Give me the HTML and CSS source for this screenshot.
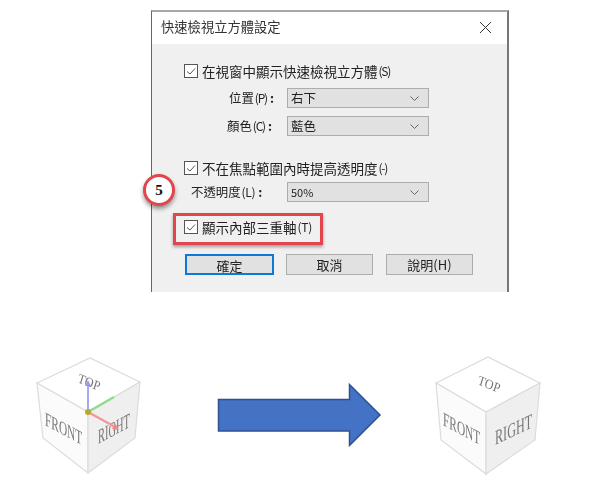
FILE: index.html
```html
<!DOCTYPE html>
<html lang="zh-Hant">
<head>
<meta charset="utf-8">
<title>快速檢視立方體設定</title>
<link rel="stylesheet" href="styles.css">
</head>
<body>
<main class="page">
  <section class="dialog">
    <header class="titlebar">
      <span class="title">快速檢視立方體設定</span>
      <svg class="close" width="13" height="13" viewBox="0 0 13 13"><path d="M1 1 12 12M12 1 1 12" stroke="#333" stroke-width="1" fill="none"/></svg>
    </header>
    <div class="body">
      <label class="check check-first"><span class="box"><svg width="12" height="12" viewBox="0 0 12 12"><path d="M2 6.500 5 9 10 3.500" stroke="#555" stroke-width="1" fill="none"/></svg></span>在視窗中顯示快速檢視立方體<span class="key">(S)</span></label>
      <div class="field field-first"><span class="field-label indent-wide">位置<span class="key">(P)</span><b class="colon">:</b></span><span class="select">右下<svg class="chev" width="9" height="5" viewBox="0 0 9 5"><path d="M.5.5 4.500 4.500 8.500.5" stroke="#666" fill="none"/></svg></span></div>
      <div class="field field-next"><span class="field-label indent-mid">顏色<span class="key">(C)</span><b class="colon">:</b></span><span class="select">藍色<svg class="chev" width="9" height="5" viewBox="0 0 9 5"><path d="M.5.5 4.500 4.500 8.500.5" stroke="#666" fill="none"/></svg></span></div>
      <label class="check check-second"><span class="box"><svg width="12" height="12" viewBox="0 0 12 12"><path d="M2 6.500 5 9 10 3.500" stroke="#555" stroke-width="1" fill="none"/></svg></span>不在焦點範圍內時提高透明度<span class="key">(-)</span></label>
      <div class="field field-tight"><span class="field-label indent-narrow">不透明度<span class="key key-wide">(L)</span><b class="colon">:</b></span><span class="select select-small">50%<svg class="chev" width="9" height="5" viewBox="0 0 9 5"><path d="M.5.5 4.500 4.500 8.500.5" stroke="#666" fill="none"/></svg></span></div>
      <label class="check check-third"><span class="box"><svg width="12" height="12" viewBox="0 0 12 12"><path d="M2 6.500 5 9 10 3.500" stroke="#555" stroke-width="1" fill="none"/></svg></span>顯示內部三重軸<span class="key key-wide">(T)</span></label>
      <div class="buttons">
        <button class="btn btn-primary" type="button">確定</button>
        <button class="btn" type="button">取消</button>
        <button class="btn btn-help" type="button">說明(H)</button>
      </div>
    </div>
    <div class="highlight"></div>
    <div class="step">5</div>
  </section>

  <section class="compare">
    <svg class="cube" width="110" height="125" viewBox="35 352 110 125">
      <path class="face-top" d="M37 383 90 358 140 382 88 412Z"/>
      <path class="face-left" d="M37 383 88 412 88 473 43 438Z"/>
      <path class="face-right" d="M88 412 140 382 135 438 88 473Z"/>
      <text class="cube-label" transform="matrix(.71 .38 0 1.2 45 425)">FRONT</text>
      <text class="cube-label" transform="matrix(.65 -.35 0 1.3 98 444)">RIGHT</text>
      <text class="cube-label" transform="matrix(.72 .3 -.25 .8 77 382)">TOP</text>
      <path d="M88 412V385" stroke="#a9a9f2" stroke-width="2" fill="none"/>
      <path d="M85 386 88 380 91 386Z" fill="#9a9ae8"/>
      <path d="M88 412 114 397" stroke="#8fdc8f" stroke-width="2.500" fill="none"/>
      <path d="M88 412 117 428" stroke="#ee9a9a" stroke-width="2.500" fill="none"/>
      <path d="M112 429 119 430 115 423Z" fill="#e88"/>
      <circle cx="88" cy="412" r="3" fill="#b8a830"/>
    </svg>
    <svg class="arrow" width="170" height="70" viewBox="215 380 170 70">
      <path d="M218.500 399.500H349.500V384.500L380 415 349.500 445.500V431H218.500Z" fill="#4472c4" stroke="#2f528f" stroke-width="1.500"/>
    </svg>
    <svg class="cube" width="110" height="125" viewBox="433 352 110 125">
      <path class="face-top" d="M436 383 488 357 540 383 486 412Z"/>
      <path class="face-left" d="M436 383 486 412 486 474 441 440Z"/>
      <path class="face-right" d="M486 412 540 383 535 440 486 474Z"/>
      <text class="cube-label" transform="matrix(.71 .38 0 1.2 443 425)">FRONT</text>
      <text class="cube-label" transform="matrix(.76 -.36 0 1.3 495 445)">RIGHT</text>
      <text class="cube-label" transform="matrix(.72 .3 -.25 .8 477 384)">TOP</text>
    </svg>
  </section>
</main>
</body>
</html>
```
FILE: styles.css
```css
* { box-sizing: border-box; }
html, body { margin: 0; padding: 0; background: #fff; }
body { font-family: "Noto Sans CJK TC", "Liberation Sans", sans-serif; color: #222; }
.page { width: 610px; height: 484px; overflow: hidden; padding-top: 10px; }

.dialog {
  position: relative;
  margin-left: 151px;
  width: 358px;
  height: 282px;
  background: #f0f0f0;
  border-top: 2px solid #a8a8a8;
  border-left: 1px solid #666;
  border-right: 2px solid #777;
  display: flex;
  flex-direction: column;
}
.titlebar {
  height: 32px;
  flex: none;
  background: #fff;
  display: flex;
  align-items: center;
  justify-content: space-between;
  padding: 0 15px 2px 10px;
}
.title { font-size: 13.3px; line-height: 30px; color: #333; margin-left: -1px; filter: blur(.3px); }
.body { padding: 20px 0 0 32px; display: flex; flex-direction: column; font-size: 13.5px; filter: blur(.3px); }

.check { display: flex; align-items: center; height: 14px; line-height: 14px; white-space: nowrap; }
.box {
  width: 14px; height: 14px; flex: none; margin-right: 4px;
  border: 1px solid #555; background: #fff;
  display: flex; align-items: center; justify-content: center;
}
.key { font-size: 12px; letter-spacing: -1.2px; margin-left: 1px; }
.key-wide { letter-spacing: -.3px; }
.colon { font-weight: 700; margin-left: 3px; }
.check-second { margin-top: 25px; }
.check-third { margin-top: 18px; }

.field { display: flex; align-items: center; height: 20px; }
.field-first { margin-top: 10px; }
.field-next { margin-top: 8px; }
.field-tight { margin-top: 7px; }
.field-label { width: 103px; flex: none; white-space: nowrap; font-size: 12.4px; }
.indent-wide { padding-left: 45px; }
.indent-mid { padding-left: 43px; }
.indent-narrow { padding-left: 7px; }
.select {
  width: 142px; height: 20px;
  background: #e1e1e1;
  border: 1px solid #adadad;
  padding: 0 9px 0 3px;
  display: flex; align-items: center; justify-content: space-between;
  font-size: 12.5px;
  line-height: 18px;
}
.select-small { font-size: 11px; }

.buttons { display: flex; margin: 20px 0 0 1px; }
.btn {
  width: 87px; height: 21px; margin: 0 13px 0 0; padding: 0;
  background: #e1e1e1; border: 1px solid #adadad;
  font: 13px/19px "Noto Sans CJK TC", sans-serif; color: #222;
}
.btn-primary { width: 89px; margin-right: 12px; border: 2px solid #0f78d4; }

.highlight {
  position: absolute; left: 21px; top: 201px;
  width: 150px; height: 32px;
  border: 3px solid #e2454b;
  box-shadow: 0 2px 3px rgba(0,0,0,.35);
}
.step {
  position: absolute; left: -9px; top: 162px;
  width: 32px; height: 32px; border-radius: 50%;
  background: #fff; border: 3px solid #e2454b;
  box-shadow: 0 3px 4px rgba(0,0,0,.4);
  display: flex; align-items: center; justify-content: center;
  font: bold 15px "Liberation Serif", serif; color: #111;
}

.compare { display: flex; align-items: center; margin-top: 60px; padding-left: 35px; height: 125px; }
.cube { flex: none; display: block; filter: blur(.5px); }
.arrow { flex: none; display: block; margin: 0 48px 0 70px; }
.face-top { fill: #fff; stroke: #dcdcdc; stroke-width: 1.2; }
.face-left { fill: #fbfbfb; stroke: #dcdcdc; stroke-width: 1.2; }
.face-right { fill: #efefef; stroke: #dcdcdc; stroke-width: 1.2; }
.cube-label { font: 16px "Liberation Serif", serif; fill: #777; }
```
